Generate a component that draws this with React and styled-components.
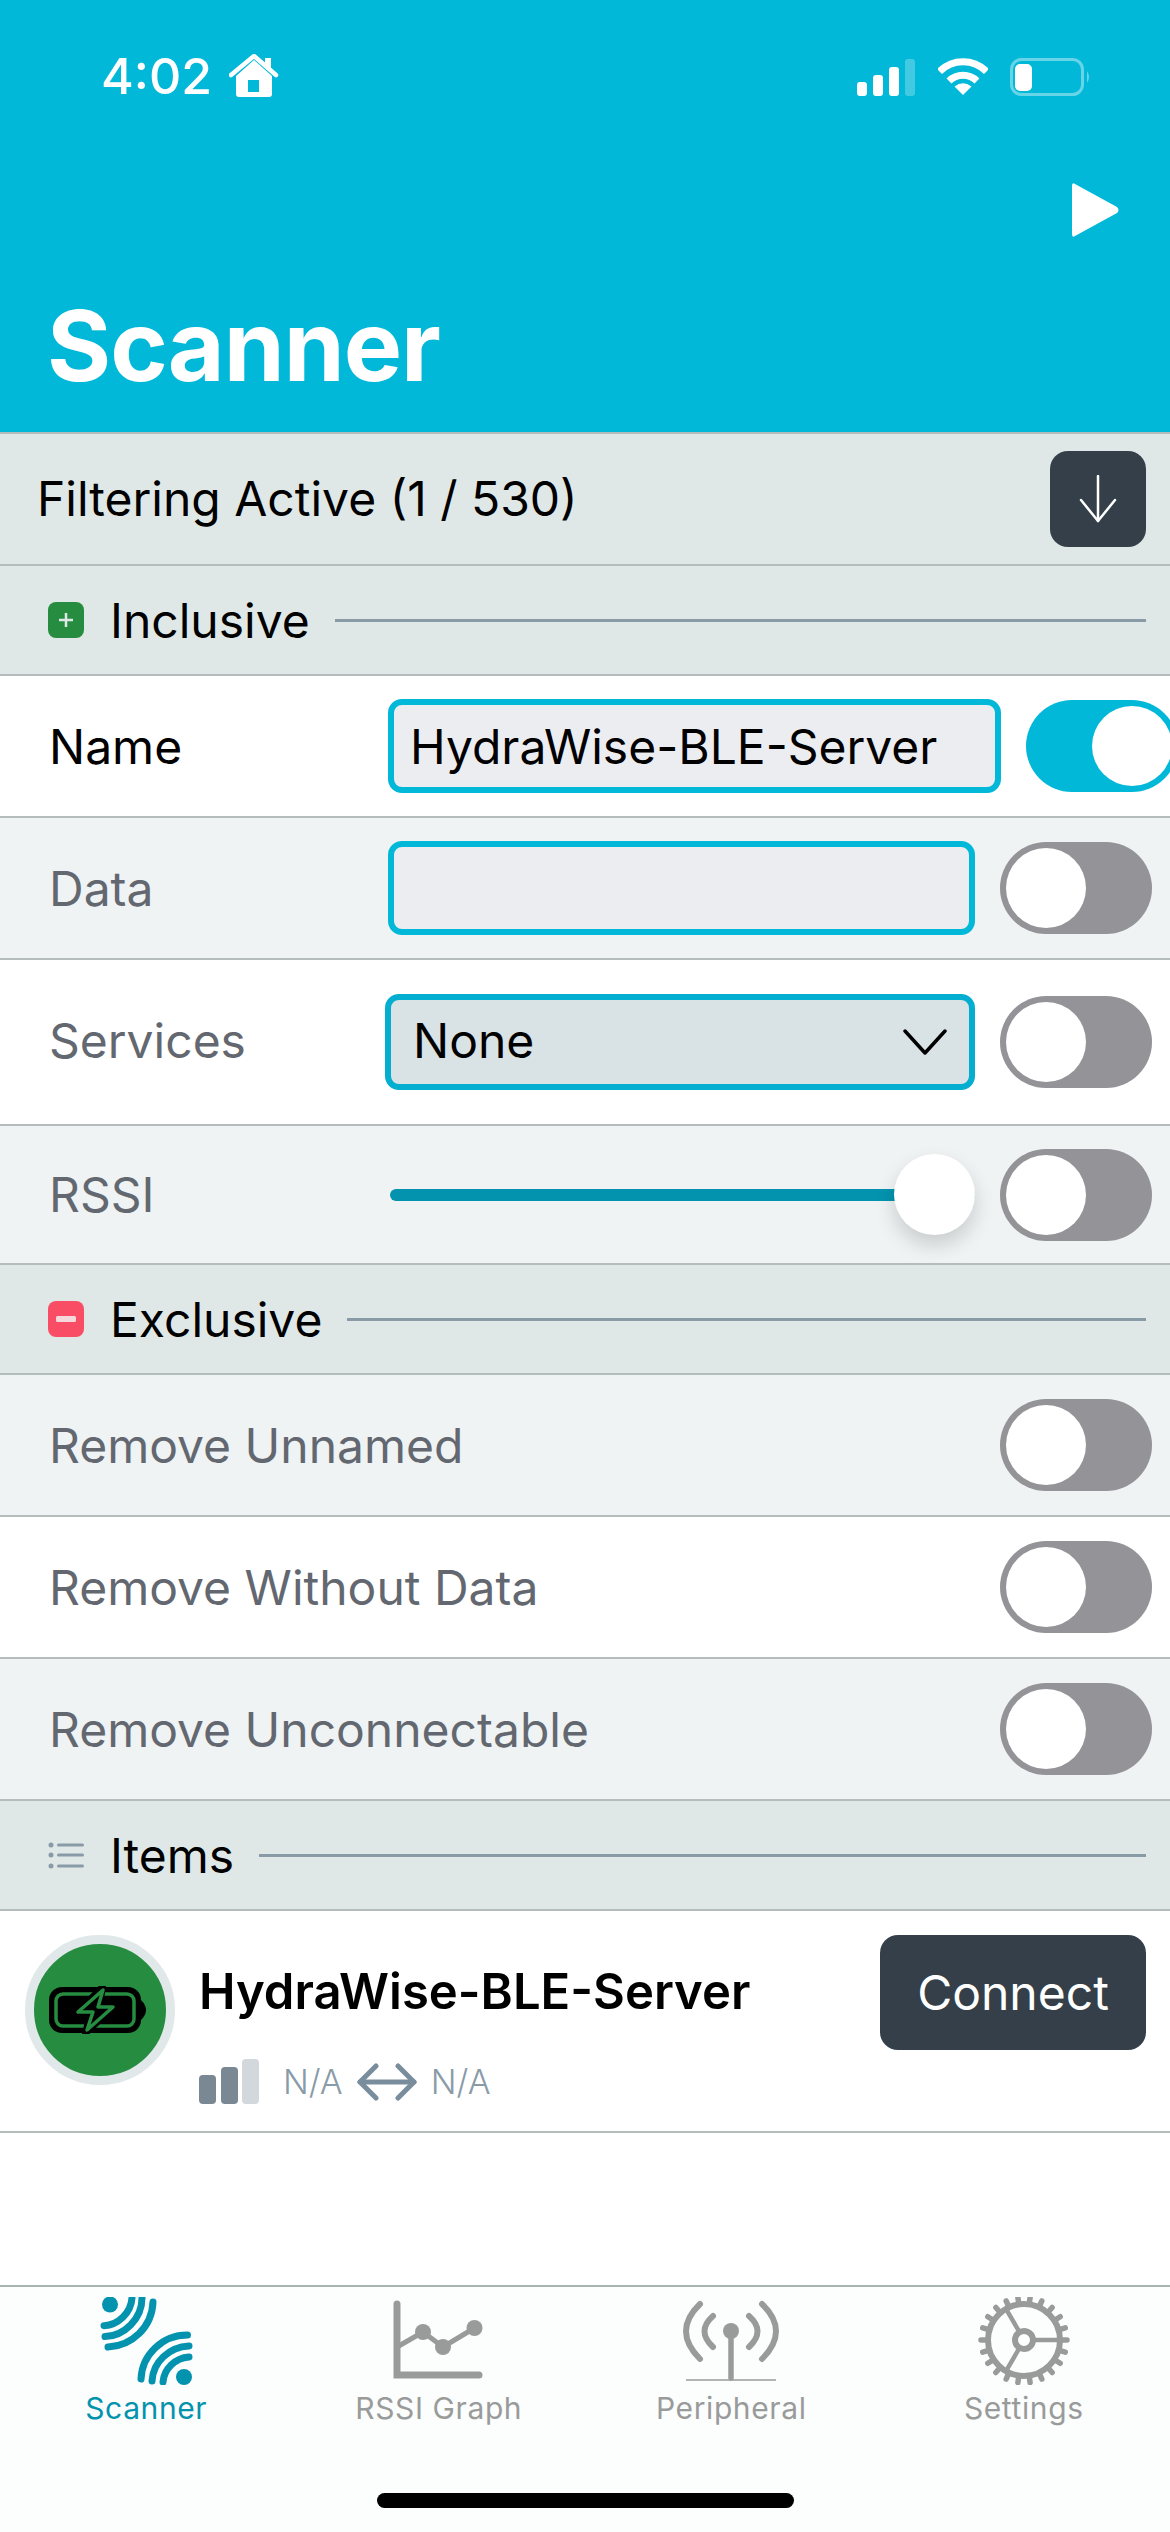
import styled, { createGlobalStyle } from "styled-components";

const GlobalStyle = createGlobalStyle`
  html, body {
    margin: 0;
    padding: 0;
    background: #ffffff;
  }
  body {
    font-family: "Inter", "Liberation Sans", sans-serif;
    color: #000000;
  }
`;

const teeth = Array.from({ length: 22 }, (_, i) => (i * 360) / 22);

const App = () => {
  return (
    <Page>
      <GlobalStyle />
      <Header>
        <StatusBar>
          <Clock>
            <Time>4:02</Time>
            <svg width="50" height="45" viewBox="227 56 50 45">
              <path d="M234 78 L252 62 L270 78 V96 Q270 99 267 99 H237 Q234 99 234 96 Z M246 82 V94 H257 V82 Z" fill="#fff" fillRule="evenodd" />
              <path d="M229 77 L252 58 L274 77" fill="none" stroke="#fff" strokeWidth="4.5" strokeLinecap="round" strokeLinejoin="round" />
              <rect x="263" y="60" width="6" height="10" fill="#fff" />
            </svg>
          </Clock>
          <StatusIcons>
            <svg width="59" height="38" viewBox="856 58 59 38">
              <rect x="856" y="82" width="10" height="14" rx="3" fill="#fff" />
              <rect x="872" y="75" width="10" height="21" rx="3" fill="#fff" />
              <rect x="888" y="67" width="10" height="29" rx="3" fill="#fff" />
              <rect x="904" y="59" width="10" height="37" rx="3" fill="#fff" opacity="0.25" />
            </svg>
            <svg width="50" height="37" viewBox="0 0 50 37">
              <path d="M1.5 13.5 A33 33 0 0 1 48.5 13.5" fill="none" stroke="#fff" strokeWidth="7" />
              <path d="M11 23 A20 20 0 0 1 39 23" fill="none" stroke="#fff" strokeWidth="7" />
              <path d="M25 37 L16.5 28.5 Q25 22 33.5 28.5 Z" fill="#fff" />
            </svg>
            <svg width="82" height="38" viewBox="1010 58 82 38">
              <rect x="1011.5" y="59.5" width="71" height="35" rx="10" fill="none" stroke="#fff" strokeWidth="3" opacity="0.4" />
              <rect x="1015" y="64" width="17" height="27" rx="5" fill="#fff" />
              <path d="M1087 71 Q1091 77 1087 83 Z" fill="#fff" opacity="0.4" />
            </svg>
          </StatusIcons>
        </StatusBar>
        <ActionRow>
          <svg width="48" height="54" viewBox="0 0 48 54">
            <path d="M3 1 Q0 -1 0 3 V51 Q0 55 3 53 L45 30 Q48 27 45 24 Z" fill="#fff" />
          </svg>
        </ActionRow>
        <Title>Scanner</Title>
      </Header>

      <FilterBar>
        <FilterText>Filtering Active (1 / 530)</FilterText>
        <ExpandButton>
          <svg width="42" height="48" viewBox="0 0 42 48" fill="none" stroke="#fff" strokeWidth="2.5" strokeLinecap="round" strokeLinejoin="round">
            <path d="M21 1 V46" />
            <path d="M4 25 L21 46 L38 25" />
          </svg>
        </ExpandButton>
      </FilterBar>

      <Section>
        <SectionBadge $color="#268c40">
          <svg width="16" height="16" viewBox="0 0 16 16" stroke="#dfe8e7" strokeWidth="2.5">
            <path d="M8 1 V15 M1 8 H15" />
          </svg>
        </SectionBadge>
        <SectionTitle>Inclusive</SectionTitle>
        <SectionLine />
      </Section>

      <Row $bleed>
        <RowLabel $active>Name</RowLabel>
        <TextField>HydraWise-BLE-Server</TextField>
        <Toggle $on />
      </Row>
      <Row $shade>
        <RowLabel>Data</RowLabel>
        <TextField />
        <Toggle />
      </Row>
      <Row $tall>
        <RowLabel>Services</RowLabel>
        <SelectField>
          <span>None</span>
          <svg width="44" height="26" viewBox="0 0 44 26" fill="none" stroke="#000" strokeWidth="3.5" strokeLinecap="round" strokeLinejoin="round">
            <path d="M2 2 L22 24 L42 2" />
          </svg>
        </SelectField>
        <Toggle />
      </Row>
      <Row $shade $height={139}>
        <RowLabel>RSSI</RowLabel>
        <Slider>
          <SliderThumb />
        </Slider>
        <Toggle />
      </Row>

      <Section>
        <SectionBadge $color="#f94d66">
          <svg width="20" height="8" viewBox="0 0 20 8">
            <rect x="0" y="1" width="20" height="6" rx="1.5" fill="#f5d8dc" />
          </svg>
        </SectionBadge>
        <SectionTitle>Exclusive</SectionTitle>
        <SectionLine />
      </Section>

      <Row $shade>
        <RowLabel>Remove Unnamed</RowLabel>
        <Toggle />
      </Row>
      <Row>
        <RowLabel>Remove Without Data</RowLabel>
        <Toggle />
      </Row>
      <Row $shade>
        <RowLabel>Remove Unconnectable</RowLabel>
        <Toggle />
      </Row>

      <Section>
        <svg width="36" height="28" viewBox="0 0 36 28" fill="#8a9ba8">
          <circle cx="3" cy="4" r="2.5" />
          <circle cx="3" cy="14" r="2.5" />
          <circle cx="3" cy="25" r="2.5" />
          <rect x="9" y="2.5" width="27" height="3" rx="1.5" />
          <rect x="9" y="12.5" width="27" height="3" rx="1.5" />
          <rect x="9" y="23.5" width="27" height="3" rx="1.5" />
        </svg>
        <SectionTitle>Items</SectionTitle>
        <SectionLine />
      </Section>

      <ItemRow>
        <Avatar>
          <svg width="102" height="48" viewBox="0 0 102 48">
            <rect x="0" y="1" width="92" height="46" rx="13" fill="#000" />
            <rect x="7" y="8" width="78" height="32" rx="7" fill="none" stroke="#268c40" strokeWidth="3.5" />
            <path d="M92 14 Q102 24 92 34 Z" fill="#000" />
            <path d="M54 0 L27 27 H41 L36 48 L66 20 H51 Z" fill="#000" stroke="#000" strokeWidth="6" strokeLinejoin="round" />
            <path d="M54 4 L29 26 H44 L38 44 L64 21 H49 Z" fill="#000" stroke="#268c40" strokeWidth="3.5" strokeLinejoin="round" />
          </svg>
        </Avatar>
        <ItemBody>
          <ItemName>HydraWise-BLE-Server</ItemName>
          <ItemMeta>
            <svg width="60" height="45" viewBox="0 0 60 45">
              <rect x="0" y="16" width="17" height="29" rx="4" fill="#7a8894" />
              <rect x="22" y="8" width="17" height="37" rx="4" fill="#7a8894" />
              <rect x="43" y="0" width="17" height="45" rx="4" fill="#d3d8dd" />
            </svg>
            <MetaValue>N/A</MetaValue>
            <svg width="60" height="38" viewBox="0 0 60 38" fill="none" stroke="#7a8d9c" strokeWidth="5" strokeLinecap="round" strokeLinejoin="round">
              <path d="M3 19 H57" />
              <path d="M19 3 L3 19 L19 35" />
              <path d="M41 3 L57 19 L41 35" />
            </svg>
            <MetaValue>N/A</MetaValue>
          </ItemMeta>
        </ItemBody>
        <ConnectButton>Connect</ConnectButton>
      </ItemRow>

      <Spacer />

      <TabBar>
        <Tab $active>
          <svg width="100" height="88" viewBox="-6 0 100 88" fill="none" stroke="#0493ae" strokeWidth="7" strokeLinecap="round">
            <circle cx="8" cy="7.5" r="8" fill="#0493ae" stroke="none" />
            <path d="M30 1 C29 16 16 28 2 28.7" />
            <path d="M40 1 C40 22 22 39 3 39.6" />
            <path d="M51 5 C50 30 30 49 6 50" />
            <circle cx="82" cy="80" r="8" fill="#0493ae" stroke="none" />
            <path d="M85.5 38 C60 38 40 58 39 82" />
            <path d="M87 49 C67 50 51 65 50 84" />
            <path d="M87 60 C73 61 62 72 61 85" />
          </svg>
          <TabLabel>Scanner</TabLabel>
        </Tab>
        <Tab>
          <svg width="100" height="88" viewBox="389 2297 100 88" fill="none" stroke="#999b9b" strokeLinecap="round">
            <path d="M397 2304 V2375 H479" strokeWidth="7" />
            <path d="M397 2347 L423 2332 L443 2347 L474.5 2328" strokeWidth="5" />
            <circle cx="423" cy="2332" r="8" fill="#999b9b" stroke="none" />
            <circle cx="443" cy="2347" r="8" fill="#999b9b" stroke="none" />
            <circle cx="474.5" cy="2328" r="8" fill="#999b9b" stroke="none" />
          </svg>
          <TabLabel>RSSI Graph</TabLabel>
        </Tab>
        <Tab>
          <svg width="100" height="88" viewBox="682 2297 100 88" fill="none" stroke="#999b9b" strokeLinecap="round">
            <circle cx="732" cy="2331" r="8" fill="#999b9b" stroke="none" />
            <path d="M732 2331 V2378" strokeWidth="5.5" />
            <path d="M687 2380 H777" strokeWidth="1.5" strokeLinecap="butt" />
            <path d="M701 2304 Q673 2331 701 2359" strokeWidth="6" />
            <path d="M714 2316 Q697 2331 714 2347" strokeWidth="6" />
            <path d="M763 2304 Q791 2331 763 2359" strokeWidth="6" />
            <path d="M750 2316 Q767 2331 750 2347" strokeWidth="6" />
          </svg>
          <TabLabel>Peripheral</TabLabel>
        </Tab>
        <Tab>
          <svg width="100" height="88" viewBox="-50 -43 100 88" fill="none" stroke="#999b9b">
            <circle r="36" strokeWidth="6" />
            <circle r="9" strokeWidth="6" />
            <path d="M9 0 H36 M-4.5 7.8 L-18 31.2 M-4.5 -7.8 L-18 -31.2" strokeWidth="4.5" />
            {teeth.map((angle) => (
              <path key={angle} d="M36 0 H43" strokeWidth="5.5" strokeLinecap="round" transform={`rotate(${angle})`} />
            ))}
          </svg>
          <TabLabel>Settings</TabLabel>
        </Tab>
      </TabBar>
      <HomeZone>
        <HomeIndicator />
      </HomeZone>
    </Page>
  );
};

export default App;

const Page = styled.div`
  width: 1170px;
  height: 2532px;
  display: flex;
  flex-direction: column;
  overflow: hidden;
  background: #ffffff;
`;

const Header = styled.header`
  height: 432px;
  flex-shrink: 0;
  display: flex;
  flex-direction: column;
  background: #02b8d9;
`;

const StatusBar = styled.div`
  display: flex;
  align-items: center;
  justify-content: space-between;
  height: 45px;
  margin-top: 54px;
  padding: 0 78px 0 101px;
`;

const Clock = styled.div`
  display: flex;
  align-items: center;
  gap: 17px;
`;

const Time = styled.span`
  font-size: 50px;
  font-weight: 500;
  line-height: 45px;
  color: #ffffff;
`;

const StatusIcons = styled.div`
  display: flex;
  align-items: center;
  gap: 22px;
`;

const ActionRow = styled.div`
  display: flex;
  justify-content: flex-end;
  margin-top: 84px;
  padding-right: 50px;
`;

const Title = styled.h1`
  margin: auto 0 0;
  padding: 0 0 28px 47px;
  font-size: 98px;
  font-weight: 700;
  line-height: 116px;
  letter-spacing: -1px;
  color: #ffffff;
`;

const FilterBar = styled.div`
  height: 134px;
  flex-shrink: 0;
  box-sizing: border-box;
  display: flex;
  align-items: center;
  justify-content: space-between;
  padding: 0 24px 0 37px;
  background: #dfe8e7;
  border-top: 2px solid #b5bcbc;
  border-bottom: 2px solid #b5bcbc;
`;

const FilterText = styled.span`
  font-size: 48px;
  margin-top: -2px;
`;

const ExpandButton = styled.button`
  width: 96px;
  height: 96px;
  display: flex;
  align-items: center;
  justify-content: center;
  padding: 0;
  border: none;
  border-radius: 18px;
  background: #343f49;
`;

const Section = styled.div`
  height: 110px;
  flex-shrink: 0;
  box-sizing: border-box;
  display: flex;
  align-items: center;
  padding: 0 24px 0 48px;
  background: #dfe8e7;
  border-bottom: 2px solid #b5bcbc;
`;

const SectionBadge = styled.div`
  width: 36px;
  height: 36px;
  display: flex;
  align-items: center;
  justify-content: center;
  border-radius: 8px;
  background: ${({ $color }) => $color};
`;

const SectionTitle = styled.span`
  margin: 0 25px 0 26px;
  font-size: 48px;
`;

const SectionLine = styled.div`
  flex: 1;
  height: 3px;
  background: #8a9ba8;
`;

const Row = styled.div`
  height: ${({ $tall, $height }) => ($tall ? 166 : $height || 142)}px;
  flex-shrink: 0;
  box-sizing: border-box;
  display: flex;
  align-items: center;
  gap: 25px;
  padding: ${({ $bleed }) => ($bleed ? "0 0 0 49px" : "0 18px 0 49px")};
  background: ${({ $shade }) => ($shade ? "#eff3f4" : "#ffffff")};
  border-bottom: 2px solid #b5bcbc;

  ${({ $bleed }) => $bleed && "& > :last-child { margin-right: -8px; }"}
  ${({ $tall }) => $tall && "& span { margin-top: -4px; }"}
`;

const RowLabel = styled.span`
  flex: 0 0 314px;
  font-size: 48px;
  white-space: nowrap;
  color: ${({ $active }) => ($active ? "#000000" : "#636870")};

  &:nth-last-child(2) {
    flex: 1;
  }
`;

const TextField = styled.div`
  flex: 1;
  height: 94px;
  box-sizing: border-box;
  display: flex;
  align-items: center;
  padding-left: 16px;
  border: 6px solid #02b8d9;
  border-radius: 14px;
  background: #ecedf1;
  font-size: 48px;
`;

const SelectField = styled.div`
  flex: 1;
  height: 96px;
  margin-left: -3px;
  box-sizing: border-box;
  display: flex;
  align-items: center;
  justify-content: space-between;
  padding: 0 22px;
  border: 6px solid #03aed0;
  border-radius: 14px;
  background: #d9e2e4;
  font-size: 48px;
`;

const Slider = styled.div`
  flex: 1;
  position: relative;
  height: 12px;
  margin-left: 2px;
  border-radius: 6px;
  background: #0493ae;
`;

const SliderThumb = styled.div`
  position: absolute;
  right: 0;
  top: -35px;
  width: 81px;
  height: 81px;
  border-radius: 50%;
  background: #ffffff;
  box-shadow: 0 10px 20px rgba(0, 0, 0, 0.16);
`;

const Toggle = styled.div`
  width: 152px;
  height: 92px;
  flex-shrink: 0;
  position: relative;
  border-radius: 46px;
  background: ${({ $on }) => ($on ? "#02b8d9" : "#939398")};

  &::after {
    content: "";
    position: absolute;
    top: 6px;
    left: ${({ $on }) => ($on ? "66px" : "6px")};
    width: 80px;
    height: 80px;
    border-radius: 50%;
    background: #ffffff;
  }
`;

const ItemRow = styled.div`
  height: 222px;
  flex-shrink: 0;
  box-sizing: border-box;
  display: flex;
  align-items: flex-start;
  padding: 24px 24px 0 25px;
  border-bottom: 2px solid #b5bcbc;
`;

const Avatar = styled.div`
  width: 150px;
  height: 150px;
  flex-shrink: 0;
  box-sizing: border-box;
  display: flex;
  align-items: center;
  justify-content: center;
  border: 9px solid #e1e8ea;
  border-radius: 50%;
  background: #268c40;
`;

const ItemBody = styled.div`
  flex: 1;
  display: flex;
  flex-direction: column;
  gap: 38px;
  padding: 28px 0 0 24px;
`;

const ItemName = styled.div`
  font-size: 49px;
  font-weight: 600;
  line-height: 58px;
`;

const ItemMeta = styled.div`
  display: flex;
  align-items: center;
  gap: 14px;

  & > svg:first-child {
    margin-right: 10px;
  }
`;

const MetaValue = styled.span`
  font-size: 34px;
  font-weight: 300;
  color: #8a9ba8;
`;

const ConnectButton = styled.button`
  width: 266px;
  height: 115px;
  flex-shrink: 0;
  border: none;
  border-radius: 18px;
  background: #343f49;
  color: #ffffff;
  font-family: inherit;
  font-size: 48px;
`;

const Spacer = styled.div`
  flex: 1;
`;

const TabBar = styled.nav`
  height: 172px;
  flex-shrink: 0;
  box-sizing: border-box;
  display: grid;
  grid-template-columns: repeat(4, 1fr);
  padding-top: 10px;
  background: #fcfdfd;
  border-top: 2px solid #a9b5b3;
`;

const Tab = styled.div`
  display: flex;
  flex-direction: column;
  align-items: center;
  gap: 5px;
  color: ${({ $active }) => ($active ? "#0493ae" : "#999b9b")};
`;

const TabLabel = styled.span`
  font-size: 30px;
  line-height: 36px;
  letter-spacing: 0.6px;
`;

const HomeZone = styled.div`
  height: 75px;
  flex-shrink: 0;
  box-sizing: border-box;
  display: flex;
  justify-content: center;
  padding-top: 36px;
  background: #fcfdfd;
`;

const HomeIndicator = styled.div`
  width: 417px;
  height: 15px;
  border-radius: 8px;
  background: #000000;
`;
